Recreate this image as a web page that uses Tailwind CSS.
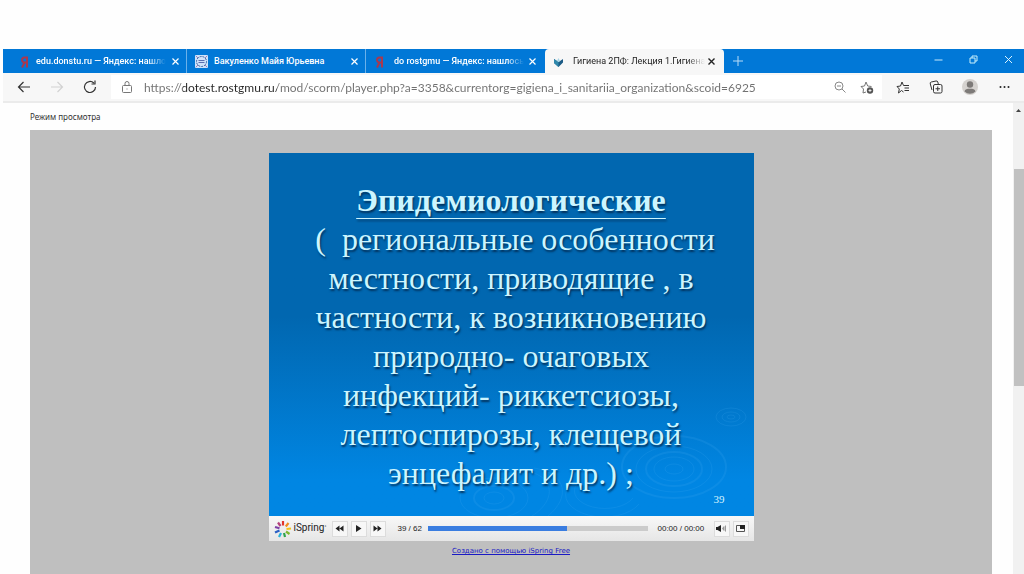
<!DOCTYPE html>
<html lang="ru">
<head>
    <meta charset="UTF-8">
    <meta name="viewport" content="width=device-width, initial-scale=1.0">
    <title>Гигиена 2ПФ: Лекция 1</title>
    <script src="https://cdn.jsdelivr.net/npm/@tailwindcss/browser@4"></script>
</head>
<body class="bg-[#fefefe] font-['Open_Sans','Noto_Sans',sans-serif]">

<div class="flex min-h-screen flex-col pt-[49px] pl-[3px]">

    <!-- Tabs -->
    <header>
        <nav class="flex h-6 items-stretch bg-[#0178d7] pl-1 font-['Roboto',sans-serif] text-[9px] font-medium text-white">
            <div class="flex w-[180px] items-center border-r border-[#6bb1ea] pr-[6px] pl-3">
                <a href="#" class="flex min-w-0 flex-1 items-center pt-px">
                    <svg class="mr-[6px] h-3 w-[11px] shrink-0" viewBox="0 0 11 12" fill="none" stroke="#a8394f" stroke-width="2"><path d="M8 11.500V1.500H5.500A2.500 2.500 0 0 0 5.500 6.500H8M5.500 6.500L3 11.500"/></svg>
                    <span class="whitespace-nowrap [mask-image:linear-gradient(to_right,black_86%,transparent)]">edu.donstu.ru — Яндекс: нашло</span>
                </a>
                <button aria-label="Закрыть вкладку" class="shrink-0"><svg class="size-[9px]" viewBox="0 0 9 9" stroke="white" stroke-width="1.200"><path d="M1.500 1.500l6 6M7.500 1.500l-6 6"/></svg></button>
            </div>
            <div class="flex w-[179px] items-center border-r border-[#6bb1ea] pr-[6px] pl-2">
                <a href="#" class="flex min-w-0 flex-1 items-center pt-px">
                    <svg class="mr-[6px] size-[13px] shrink-0" viewBox="0 0 13 13" fill="none"><rect width="13" height="13" rx="1" fill="#cfe2fa"/><circle cx="6.500" cy="6.500" r="5" stroke="#2f5f9e" stroke-dasharray="2 1"/><path d="M3.500 5.500h6M3.500 7.500h6" stroke="#5b6fb0"/><path d="M1 1l2 2M12 1l-2 2M1 12l2-2M12 12l-2-2" stroke="#9c7fb5"/></svg>
                    <span class="whitespace-nowrap">Вакуленко Майя Юрьевна</span>
                </a>
                <button aria-label="Закрыть вкладку" class="shrink-0"><svg class="size-[9px]" viewBox="0 0 9 9" stroke="white" stroke-width="1.200"><path d="M1.500 1.500l6 6M7.500 1.500l-6 6"/></svg></button>
            </div>
            <div class="flex w-[179px] items-center pr-2 pl-2">
                <a href="#" class="flex min-w-0 flex-1 items-center pt-px">
                    <svg class="mr-[9px] h-3 w-[11px] shrink-0" viewBox="0 0 11 12" fill="none" stroke="#a8394f" stroke-width="2"><path d="M8 11.500V1.500H5.500A2.500 2.500 0 0 0 5.500 6.500H8M5.500 6.500L3 11.500"/></svg>
                    <span class="whitespace-nowrap [mask-image:linear-gradient(to_right,black_86%,transparent)]">do rostgmu — Яндекс: нашлось</span>
                </a>
                <button aria-label="Закрыть вкладку" class="shrink-0"><svg class="size-[9px]" viewBox="0 0 9 9" stroke="white" stroke-width="1.200"><path d="M1.500 1.500l6 6M7.500 1.500l-6 6"/></svg></button>
            </div>
            <div class="flex w-[179px] items-center rounded-t bg-[#f7f7f7] pr-2 pl-2 font-normal text-[#222]">
                <a href="#" class="flex min-w-0 flex-1 items-center pt-px">
                    <svg class="mr-[9px] h-3 w-[11px] shrink-0" viewBox="0 0 11 12"><path d="M1 3L5.500 6 10 3 10 6.500 5.500 11 1 7z" fill="#1c5c86"/><path d="M1 3L5.500 6V11L1 7z" fill="#2f88ab"/><path d="M4 5l1.500-3L7 5 5.500 6z" fill="#a9d6e6"/></svg>
                    <span class="whitespace-nowrap [mask-image:linear-gradient(to_right,black_86%,transparent)]">Гигиена 2ПФ: Лекция 1.Гигиена</span>
                </a>
                <button aria-label="Закрыть вкладку" class="shrink-0"><svg class="size-[9px]" viewBox="0 0 9 9" stroke="#222" stroke-width="1.400"><path d="M1.500 1.500l6 6M7.500 1.500l-6 6"/></svg></button>
            </div>
            <button aria-label="Новая вкладка" class="ml-2"><svg class="size-3" viewBox="0 0 12 12" stroke="#b9dcf7"><path d="M6 1v10M1 6h10"/></svg></button>
            <div class="ml-auto flex items-center gap-6 pr-[10px] pb-[3px]">
                <button aria-label="Свернуть"><svg class="size-[11px]" viewBox="0 0 11 11" stroke="#c9e9fb"><path d="M1.500 6h8"/></svg></button>
                <button aria-label="Развернуть"><svg class="size-[11px]" viewBox="0 0 11 11" fill="none" stroke="#c9f0fb"><path d="M2 4h5v5H2zM4 4V2h5v5H7"/></svg></button>
                <button aria-label="Закрыть"><svg class="size-[11px]" viewBox="0 0 11 11" stroke="#d9f3fd"><path d="M2 2l7 7M9 2l-7 7"/></svg></button>
            </div>
        </nav>

        <!-- Toolbar -->
        <div class="flex h-[30px] items-center border-b-2 border-[#ebebeb] bg-[#f7f7f7]">
            <div class="flex w-[108px] shrink-0 items-center gap-[19px] pl-[14px]">
                <button aria-label="Назад"><svg class="size-[14px]" viewBox="0 0 14 14" fill="none" stroke="#333" stroke-width="1.200"><path d="M13 7H1.500M6.500 2l-5 5 5 5"/></svg></button>
                <button aria-label="Вперёд"><svg class="size-[14px]" viewBox="0 0 14 14" fill="none" stroke="#d2d2d2" stroke-width="1.200"><path d="M1 7h11.500M7.500 2l5 5-5 5"/></svg></button>
                <button aria-label="Обновить"><svg class="size-[14px]" viewBox="0 0 14 14" fill="none" stroke="#333" stroke-width="1.200"><path d="M12.500 7A5.500 5.500 0 1 1 10.800 3M12 .500V4H8.500"/></svg></button>
            </div>
            <div class="flex h-6 min-w-0 flex-1 items-center bg-white pr-2 pl-[10px]">
                <svg class="size-3 shrink-0" viewBox="0 0 12 12" fill="none" stroke="#777"><rect x="1.500" y="4.500" width="9" height="7" rx="1"/><path d="M4 4.500V2.500a2 2 0 0 1 4 0v2"/><path d="M5.500 8h1"/></svg>
                <input type="text" aria-label="Адрес" class="ml-[11px] min-w-0 flex-1 bg-[linear-gradient(to_right,#707070_39px,#262626_39px,#262626_133px,#707070_133px)] bg-clip-text pt-px font-['Lato',sans-serif] text-[12px] text-transparent outline-none" value="https://dotest.rostgmu.ru/mod/scorm/player.php?a=3358&amp;currentorg=gigiena_i_sanitariia_organization&amp;scoid=6925">
                <button aria-label="Масштаб" class="mr-[14px]"><svg class="size-3" viewBox="0 0 12 12" fill="none" stroke="#888"><circle cx="5" cy="5" r="4"/><path d="M8 8l3.500 3.500M3 5h4"/></svg></button>
                <button aria-label="В избранное"><svg class="h-[13px] w-[14px]" viewBox="0 0 14 13" fill="none" stroke="#777"><path d="M6 11L3 12l.500-4L1 5.500l3.500-.500L6 1l1.700 4 3.800.500"/><circle cx="10" cy="9.500" r="3.200" fill="#555" stroke="none"/><path d="M10 8v3M8.500 9.500h3" stroke="#fff" stroke-width=".8"/></svg></button>
            </div>
            <div class="flex shrink-0 items-center pr-[14px] pl-[14px]">
                <button aria-label="Избранное"><svg class="h-[13px] w-[14px]" viewBox="0 0 14 13" fill="none" stroke="#333"><path d="M7.500 11L5.500 9.500 2.500 12l.800-4L1 5.500l3.500-.500L6 1l1.500 3.500H13M8.500 7H13M8.500 9.500H13"/></svg></button>
                <button aria-label="Коллекции" class="ml-[19px]"><svg class="size-[14px]" viewBox="0 0 14 14" fill="none" stroke="#333"><rect x="4.500" y="4.500" width="8.500" height="8.500" rx="1.500"/><path d="M8.750 6.500v4.500M6.500 8.750H11M3 10L1.300 4A1.500 1.500 0 0 1 2.300 2L7 1a1.500 1.500 0 0 1 1.800 1L9.300 4"/></svg></button>
                <button aria-label="Профиль" class="ml-[19px]"><svg class="size-4" viewBox="0 0 16 16"><circle cx="8" cy="8" r="8" fill="#d5d2cf"/><circle cx="8" cy="5.500" r="3.200" fill="#7d7a78"/><path d="M2.500 12.500C3 10 5 9.800 8 9.800s5 .200 5.500 2.700A8 8 0 0 1 2.500 12.500z" fill="#7d7a78"/></svg></button>
                <button aria-label="Меню" class="ml-[21px]"><svg class="h-3 w-[11px]" viewBox="0 0 11 12" fill="#222"><circle cx="1.500" cy="6" r="1"/><circle cx="5.500" cy="6" r="1"/><circle cx="9.500" cy="6" r="1"/></svg></button>
            </div>
        </div>
    </header>

    <div class="flex flex-1">
        <main class="flex flex-1 flex-col pr-[21px] pl-[27px]">
            <p class="h-[27px] pt-[6px] font-['Noto_Sans',sans-serif] text-[8px] leading-4 text-[#333]">Режим просмотра</p>

            <div class="flex flex-1 flex-col items-center bg-[#bfbfbf] pt-[23px]">
                <div class="w-[485px]">
                    <!-- Slide -->
                    <section class="relative overflow-hidden bg-linear-to-b from-[#0167b0] from-45% to-[#0086e3] to-90% pt-[28px] pb-[23px] font-['Liberation_Serif',serif]">
                        <svg class="absolute right-0 bottom-0 h-[120px] w-[310px]" viewBox="0 0 310 120" fill="none" stroke="#4ab0f5" stroke-opacity=".16">
                            <ellipse cx="287" cy="21" rx="4" ry="2"/><ellipse cx="287" cy="21" rx="9" ry="5"/><ellipse cx="287" cy="21" rx="15" ry="9"/>
                            <ellipse cx="230" cy="73" rx="9" ry="5"/><ellipse cx="230" cy="73" rx="20" ry="12"/><ellipse cx="230" cy="73" rx="28" ry="17" stroke-width="2"/><ellipse cx="230" cy="73" rx="38" ry="23"/><ellipse cx="230" cy="71" rx="52" ry="31" stroke-width="2"/>
                            <path d="M125 90a35 20 0 0 0 70 18M133 88a28 16 0 0 0 56 14"/>
                            <ellipse cx="50" cy="102" rx="10" ry="6"/><ellipse cx="50" cy="102" rx="20" ry="12" stroke-width="2"/><ellipse cx="50" cy="102" rx="34" ry="20"/>
                            <path d="M70 74c40 0 46 28 18 46M90 72c34 6 36 30 14 48"/>
                        </svg>
                        <h1 class="relative text-center text-[32px] leading-[39px] text-[#ccf5ff] [text-shadow:1px_2px_2px_#02305a]">
                            <b class="underline decoration-1 underline-offset-[7px] [text-decoration-skip-ink:none]">Эпидемиологические</b><br>
                            &nbsp;(&nbsp; региональные особенности<br>
                            местности, приводящие , в<br>
                            частности, к возникновению<br>
                            природно- очаговых<br>
                            инфекций- риккетсиозы,<br>
                            лептоспирозы, клещевой<br>
                            энцефалит и др.) ;
                        </h1>
                        <span class="absolute right-[29px] bottom-[9px] text-[11px] leading-4 text-[#d5f3ff]">39</span>
                    </section>

                    <!-- Player controls -->
                    <div class="flex h-[25px] items-center bg-linear-to-b from-[#f8f8f8] to-[#e6e6e6] px-[5px] font-['Liberation_Sans',sans-serif] text-[8px] text-[#222]">
                        <svg class="size-[18px]" viewBox="0 0 18 18" stroke-width="2.200">
                            <path d="M9 1v4.500" stroke="#e2352b"/><path d="M14.500 3l-2.700 3.500" stroke="#f28a1f"/><path d="M17 8.500l-4.500.500" stroke="#f5c518"/><path d="M15.500 14l-3.500-2.500" stroke="#7fb82d"/><path d="M11 17l-1-4" stroke="#2da34b"/><path d="M5 17l2-4" stroke="#2bb2d9"/><path d="M1 12.500l4.500-2" stroke="#2a5fc4"/><path d="M1 7l4.500 1.300" stroke="#7d3fa6"/><path d="M4 2.500L6.500 6" stroke="#b4417a"/>
                        </svg>
                        <span class="ml-[2px] w-[38px] pb-[2px] font-['Roboto',sans-serif] text-[10px]">iSpring<sup class="text-[5px]">°</sup></span>
                        <div class="flex gap-[3px]">
                            <button aria-label="Предыдущий слайд" class="grid size-4 place-items-center border border-[#dcdcdc] bg-[#f7f7f7]"><svg class="size-[9px]" viewBox="0 0 9 9" fill="#222"><path d="M4.500 1.500v6L.500 4.500zM8.500 1.500v6L4.500 4.500z"/></svg></button>
                            <button aria-label="Воспроизвести" class="grid size-4 place-items-center border border-[#dcdcdc] bg-[#f7f7f7]"><svg class="size-[9px]" viewBox="0 0 9 9" fill="#222"><path d="M2 1v7l5.500-3.500z"/></svg></button>
                            <button aria-label="Следующий слайд" class="grid size-4 place-items-center border border-[#dcdcdc] bg-[#f7f7f7]"><svg class="size-[9px]" viewBox="0 0 9 9" fill="#222"><path d="M.500 1.500v6l4-3zM4.500 1.500v6l4-3z"/></svg></button>
                        </div>
                        <label for="progress" class="ml-3 w-[30px] whitespace-nowrap">39 / 62</label>
                        <input id="progress" type="range" min="0" max="62" value="39" class="h-[5px] min-w-0 flex-1 appearance-none bg-[linear-gradient(to_right,#3a7de0_63%,#cbcbcb_63%)] [&::-webkit-slider-thumb]:appearance-none [&::-webkit-slider-thumb]:opacity-0">
                        <span class="ml-[10px] w-[56px] whitespace-nowrap">00:00 / 00:00</span>
                        <div class="flex gap-[3px]">
                            <button aria-label="Звук" class="grid size-4 place-items-center border border-[#dcdcdc] bg-[#f7f7f7]"><svg class="size-[11px]" viewBox="0 0 11 11" fill="#222"><path d="M0 4h1.500L5 2v7L1.500 7H0z"/><path d="M6 5.500L8 3v5zM8.500 3.500L10 2v7L8.500 7.500z" fill="#999"/></svg></button>
                            <button aria-label="Полный экран" class="grid size-4 place-items-center border border-[#dcdcdc] bg-[#f7f7f7]"><svg class="size-[11px]" viewBox="0 0 11 11" fill="none"><path d="M1.500 2.500h8v6h-8z" stroke="#555"/><path d="M5 2h5v4H5z" fill="#222"/></svg></button>
                        </div>
                    </div>
                </div>
                <a href="#" class="mt-[5px] font-['DejaVu_Sans',sans-serif] text-[7px] leading-[11px] text-[#1a1ac4] underline">Создано с помощью iSpring Free</a>
            </div>
        </main>

        <!-- Scrollbar -->
        <div class="flex w-[11px] flex-col items-end bg-[#f1f1f1]">
            <svg class="mt-[3px] h-2 w-[11px]" viewBox="0 0 11 8" fill="#444"><path d="M3 6l2.500-3L8 6z"/></svg>
            <div class="mt-[55px] h-[217px] w-[10px] bg-[#c1c1c1]"></div>
        </div>
    </div>
</div>

</body>
</html>
